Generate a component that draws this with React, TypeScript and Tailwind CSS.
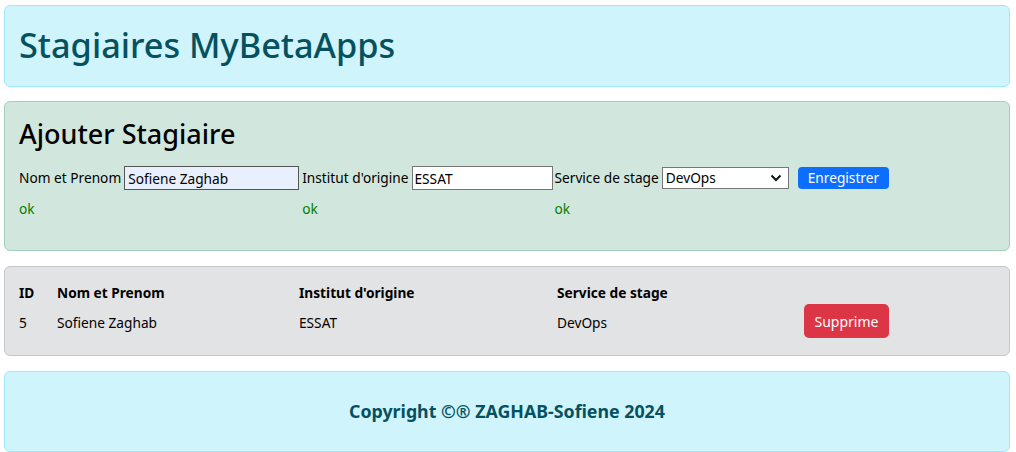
import React from "react";

export default function App() {
  const font = { fontFamily: '"Noto Sans", "Open Sans", sans-serif' };
  return (
    <div style={font} className="w-[1016px] h-[452px] bg-white pl-[4px] pr-[6px] pt-[5px] text-[13.7px] text-black overflow-hidden">
      <div className="h-[82px] rounded-[6px] border border-[#9eeaf9] bg-[#cff4fc] px-[14px] flex items-center">
        <h1 className="text-[34.3px] font-medium text-[#055160] leading-none pb-[2px]">Stagiaires MyBetaApps</h1>
      </div>

      <div className="mt-[14px] h-[150px] rounded-[6px] border border-[#a3cfbb] bg-[#d1e7dd] px-[14px] pt-[18px]">
        <h2 className="text-[27px] font-medium leading-none text-black">Ajouter Stagiaire</h2>
        <div className="mt-[19px] flex items-start">
          <div className="flex flex-col">
            <div className="flex items-center h-[24px]">
              <span>Nom et Prenom</span>
              <input
                readOnly
                value="Sofiene Zaghab"
                style={font}
                className="ml-[3px] w-[175px] h-[24px] border border-[#555] bg-[#e8f0fe] px-[3px] text-[13.7px] outline-none"
              />
            </div>
            <span className="mt-[9px] text-[#008000]">ok</span>
          </div>
          <div className="ml-[3px] flex flex-col">
            <div className="flex items-center h-[24px]">
              <span>Institut d'origine</span>
              <input
                readOnly
                value="ESSAT"
                style={font}
                className="ml-[3px] w-[141px] h-[24px] border border-[#767676] bg-white px-[2px] text-[13.7px] outline-none"
              />
            </div>
            <span className="mt-[9px] text-[#008000]">ok</span>
          </div>
          <div className="ml-[2px] flex flex-col">
            <div className="flex items-center h-[24px]">
              <span>Service de stage</span>
              <div className="ml-[3px] w-[127px] h-[22px] border border-[#767676] bg-white flex items-center justify-between pl-[3px] pr-[6px]">
                <span>DevOps</span>
                <svg width="12" height="8" viewBox="0 0 12 8" fill="none">
                  <path d="M1.5 1.5 L6 6 L10.5 1.5" stroke="#111" strokeWidth="2" />
                </svg>
              </div>
              <button className="ml-[9px] h-[22px] px-[10px] rounded-[4px] bg-[#0d6efd] text-white text-[13.7px] leading-none">
                Enregistrer
              </button>
            </div>
            <span className="mt-[9px] text-[#008000]">ok</span>
          </div>
        </div>
      </div>

      <div className="mt-[15px] h-[90px] rounded-[6px] border border-[#c4c8cb] bg-[#e2e3e5] px-[14px] pt-[16px]">
        <div className="grid grid-cols-[38px_242px_258px_247px_85px] items-center">
          <div className="font-bold h-[20px]">ID</div>
          <div className="font-bold h-[20px]">Nom et Prenom</div>
          <div className="font-bold h-[20px]">Institut d'origine</div>
          <div className="font-bold h-[20px]">Service de stage</div>
          <div />
          <div className="pt-[5px]">5</div>
          <div className="pt-[5px]">Sofiene Zaghab</div>
          <div className="pt-[5px]">ESSAT</div>
          <div className="pt-[5px]">DevOps</div>
          <div className="h-[35px] pt-[1px]">
            <button className="w-[85px] h-[34px] rounded-[5px] bg-[#dc3545] text-white text-[14px]">Supprime</button>
          </div>
        </div>
      </div>

      <div className="mt-[15px] h-[81px] rounded-[6px] border border-[#9eeaf9] bg-[#cff4fc] flex items-center justify-center">
        <span className="font-bold text-[17.8px] text-[#055160]">Copyright ©® ZAGHAB-Sofiene 2024</span>
      </div>
    </div>
  );
}
